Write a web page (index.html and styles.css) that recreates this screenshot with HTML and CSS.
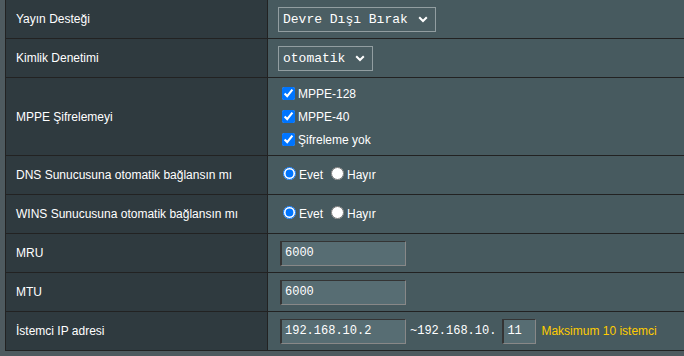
FILE: index.html
```html
<!DOCTYPE html>
<html lang="tr">
<head>
    <meta charset="UTF-8">
    <meta name="viewport" content="width=device-width, initial-scale=1.0">
    <title>VPN Sunucu Ayarları</title>
    <link rel="stylesheet" href="styles.css">
</head>
<body>
    <div class="page">
        <div class="form-table">
            <div class="row">
                <div class="label">Yayın Desteği</div>
                <div class="value">
                    <span class="select-wrap">
                        <select class="input-option wide">
                            <option>Devre Dışı Bırak</option>
                            <option>Etkinleştir</option>
                        </select>
                        <svg class="chevron" width="10" height="7" viewBox="0 0 10 7"><path d="M1.2 1.2 L5 5 L8.8 1.2" fill="none" stroke="#fff" stroke-width="2"/></svg>
                    </span>
                </div>
            </div>

            <div class="row">
                <div class="label">Kimlik Denetimi</div>
                <div class="value">
                    <span class="select-wrap">
                        <select class="input-option narrow">
                            <option>otomatik</option>
                            <option>pap</option>
                            <option>chap</option>
                        </select>
                        <svg class="chevron" width="10" height="7" viewBox="0 0 10 7"><path d="M1.2 1.2 L5 5 L8.8 1.2" fill="none" stroke="#fff" stroke-width="2"/></svg>
                    </span>
                </div>
            </div>

            <div class="row tall">
                <div class="label">MPPE Şifrelemeyi</div>
                <div class="value">
                    <div class="check-list">
                        <label><input type="checkbox" checked>MPPE-128</label>
                        <label><input type="checkbox" checked>MPPE-40</label>
                        <label><input type="checkbox" checked>Şifreleme yok</label>
                    </div>
                </div>
            </div>

            <div class="row">
                <div class="label">DNS Sunucusuna otomatik bağlansın mı</div>
                <div class="value">
                    <div class="radios">
                        <label><input type="radio" name="dns" checked>Evet</label>
                        <label><input type="radio" name="dns">Hayır</label>
                    </div>
                </div>
            </div>

            <div class="row">
                <div class="label">WINS Sunucusuna otomatik bağlansın mı</div>
                <div class="value">
                    <div class="radios">
                        <label><input type="radio" name="wins" checked>Evet</label>
                        <label><input type="radio" name="wins">Hayır</label>
                    </div>
                </div>
            </div>

            <div class="row">
                <div class="label">MRU</div>
                <div class="value">
                    <input type="text" class="input-text" value="6000">
                </div>
            </div>

            <div class="row">
                <div class="label">MTU</div>
                <div class="value">
                    <input type="text" class="input-text" value="6000">
                </div>
            </div>

            <div class="row">
                <div class="label">İstemci IP adresi</div>
                <div class="value">
                    <input type="text" class="input-text" value="192.168.10.2">
                    <span class="ip-prefix">~192.168.10.</span>
                    <input type="text" class="input-text short" value="11">
                    <span class="hint">Maksimum 10 istemci</span>
                </div>
            </div>
        </div>
    </div>
</body>
</html>
```

FILE: styles.css
```css
body {
    margin: 0;
    font-family: "Liberation Sans", Arial, sans-serif;
    font-size: 12px;
    color: #fff;
    background-color: #4e5a5f;
}

.page {
    height: 356px;
    padding-left: 5px;
    overflow: hidden;
}

.form-table {
    width: 720px;
    margin-top: -1px;
    display: grid;
    grid-template-columns: 261px 1fr;
    grid-auto-rows: minmax(38px, auto);
    gap: 1px;
    background-color: #222;
    border: 1px solid #222;
}

.row {
    display: contents;
}

.label {
    background-color: #2f3a3f;
    display: flex;
    align-items: center;
    padding-left: 10px;
}

.value {
    background-color: #475a5f;
    display: flex;
    align-items: center;
    padding-left: 10px;
}

.row.tall .label,
.row.tall .value {
    height: 77px;
    box-sizing: border-box;
}

.row.tall .value {
    align-items: flex-start;
    padding-top: 4px;
}

.select-wrap {
    position: relative;
    display: inline-flex;
}

.input-option {
    appearance: none;
    height: 25px;
    padding: 0 0 0 4px;
    margin: 0;
    background-color: #4b5e63;
    border: 1px solid #929ea1;
    border-radius: 0;
    color: #fff;
    font-family: "Liberation Mono", "Lucida Console", monospace;
    font-size: 13px;
}

.input-option.wide {
    width: 158px;
}

.input-option.narrow {
    width: 95px;
}

.chevron {
    position: absolute;
    right: 8px;
    top: 9px;
    pointer-events: none;
}

.check-list label {
    display: flex;
    align-items: center;
    height: 23px;
}

.check-list input {
    margin: 0 3px 0 4px;
}

.radios {
    display: flex;
    gap: 3px;
}

.radios label {
    display: inline-flex;
    align-items: center;
}

.radios label input {
    margin: 0 3px 3px 5px;
}

.input-text {
    box-sizing: border-box;
    width: 126px;
    height: 25px;
    margin: 0 0 0 2px;
    padding: 0 0 0 3px;
    background-color: #576d73;
    border-style: inset;
    border-width: 1px 1px 1px 2px;
    border-color: #888;
    color: #fff;
    font-family: "Liberation Mono", "Lucida Console", monospace;
    font-size: 12px;
}

.input-text.short {
    width: 34px;
    margin-left: 6px;
}

.ip-prefix {
    margin-left: 4px;
    font-family: "Liberation Mono", "Lucida Console", monospace;
    font-size: 12px;
}

.hint {
    margin-left: 5px;
    color: #ffcc00;
}
```
